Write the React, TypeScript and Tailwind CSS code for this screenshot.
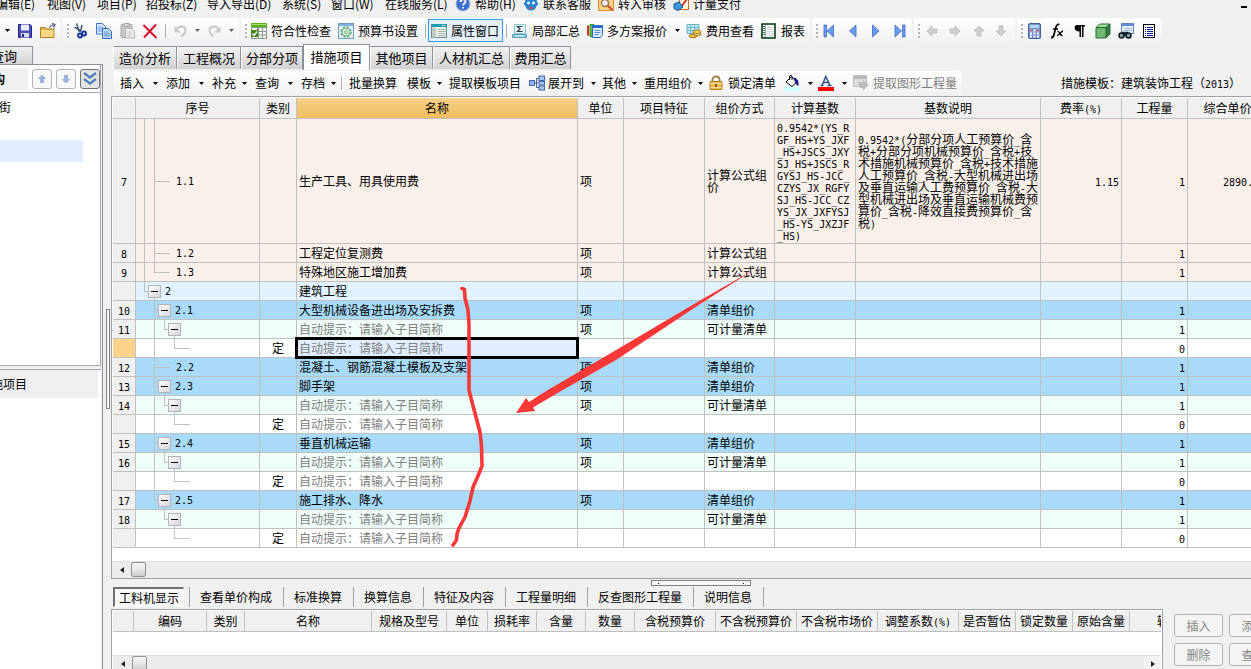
import React, { ReactNode } from "react";

/* ---------- shared pieces ---------- */

function Mixed({ text }: { text: string }) {
  return (
    <>
      {text.split(/([!-~]+)/).map((part, i) =>
        i % 2 === 1 ? (
          <span key={i} className="font-['DejaVu_Sans_Mono',monospace] text-[10px] leading-[8px]">
            {part}
          </span>
        ) : (
          part
        ),
      )}
    </>
  );
}

function Ico({ children, className = "" }: { children: ReactNode; className?: string }) {
  return (
    <svg viewBox="0 0 16 16" aria-hidden="true" className={`size-4 shrink-0 ${className}`}>
      {children}
    </svg>
  );
}

function Caret({ dim = false }: { dim?: boolean }) {
  return (
    <svg viewBox="0 0 5 3" aria-hidden="true" className="h-[3px] w-[5px] shrink-0">
      <path d="M0 0h5L2.500 3z" fill={dim ? "#666" : "#000"} />
    </svg>
  );
}

function Grip() {
  return (
    <svg viewBox="0 0 2 14" aria-hidden="true" className="mx-1 h-[14px] w-[2px] shrink-0">
      {[0, 4, 8, 12].map((y) => (
        <rect key={y} y={y} width="2" height="2" fill="#b4b4b4" />
      ))}
    </svg>
  );
}

function Band({ className, children }: { className: string; children: ReactNode }) {
  return (
    <div
      role="toolbar"
      className={`mr-[2px] flex h-[25px] shrink-0 items-center rounded-r-sm bg-linear-to-b from-white to-[#f0f0f0] ${className}`}
    >
      {children}
    </div>
  );
}

function Tool({
  w,
  icon,
  label,
  caret,
  title,
}: {
  w: string;
  icon?: ReactNode;
  label?: string;
  caret?: boolean;
  title?: string;
}) {
  return (
    <button type="button" aria-label={label ?? title} className={`flex shrink-0 items-center gap-1 whitespace-nowrap ${w}`}>
      {icon}
      {label && <span>{label}</span>}
      {caret && (
        <span className="ml-1 flex">
          <Caret />
        </span>
      )}
    </button>
  );
}

/* ---------- icons ---------- */

const SaveIcon = (
  <Ico>
    <path d="M1.500 1.500h11.500l1.500 1.500v11.500h-13z" fill="#4a4ab8" stroke="#24248c" />
    <rect x="4" y="1.500" width="8" height="6" fill="#e8f0fc" />
    <rect x="4" y="10" width="8" height="4.500" fill="#d8dcec" />
    <rect x="5" y="11" width="2" height="3" fill="#24248c" />
  </Ico>
);
const FolderIcon = (
  <Ico>
    <path d="M.5 4.500h5l1.500 1.500h7v8.500H.5z" fill="#e4b44c" stroke="#b07c20" />
    <path d="M1 7h12.500v7H1z" fill="#f8d884" />
    <path d="M9.500 4.500c1-2 2.500-2.500 4-2.500M12 .5l3 1-1.500 3" fill="none" stroke="#334a6a" strokeWidth="1.200" />
  </Ico>
);
const CutIcon = (
  <Ico>
    <path d="M3.500 .5L6.500 9M9 2L7.500 9" stroke="#4c6484" strokeWidth="1.600" fill="none" />
    <path d="M1.500 4l6 4" stroke="#20406c" strokeWidth="1.300" />
    <circle cx="7" cy="12.500" r="2" fill="none" stroke="#0c2c9c" strokeWidth="1.800" />
    <circle cx="11" cy="10.500" r="2" fill="none" stroke="#0c2c9c" strokeWidth="1.800" />
  </Ico>
);
const CopyIcon = (
  <Ico>
    <path d="M.5.5h6l3 3v7.500h-9z" fill="#d6e8fc" stroke="#3c78c8" />
    <path d="M2 4h5M2 6h5M2 8h5" stroke="#6c9cdc" />
    <path d="M6.500 5.500h6l3 3v7h-9z" fill="#c4dcfa" stroke="#2c68bc" />
    <path d="M8 9h5M8 11h6M8 13h6" stroke="#5c90d4" />
  </Ico>
);
const PasteIcon = (
  <Ico>
    <rect x="1" y="1.500" width="11" height="13" rx="1" fill="#c8c8c8" stroke="#aaa" />
    <rect x="4" y=".5" width="5" height="3" fill="#ddd" stroke="#aaa" />
    <path d="M5.500 5.500h6l3 3v6.500h-9z" fill="#eee" stroke="#b4b4b4" />
    <path d="M7 9h5M7 11h5M7 13h5" stroke="#ccc" />
  </Ico>
);
const DeleteIcon = (
  <Ico>
    <path d="M1.500 2l13 13M14 1.500L2 14.500" stroke="#d8142c" strokeWidth="2" fill="none" />
  </Ico>
);
const UndoIcon = (
  <Ico>
    <path d="M3.500 6.500C6 2 13 3 12.500 8c-.3 3-2.500 4-4.500 5.500" fill="none" stroke="#c8c8c8" strokeWidth="2.200" />
    <path d="M1.500 3v6.500H8z" fill="#c8c8c8" />
  </Ico>
);
const RedoIcon = (
  <Ico>
    <path d="M11.500 6.500C9 2 2 3 2.500 8c.3 3 2.500 4 4.500 5.500" fill="none" stroke="#ccc" strokeWidth="2.200" />
    <path d="M13.500 3v6.500H7z" fill="#ccc" />
  </Ico>
);
const CheckTableIcon = (
  <Ico>
    <rect width="16" height="16" fill="#8c9490" />
    <rect width="16" height="4" fill="#5cb41c" />
    <path d="M1 1.500h14" stroke="#a4e06c" />
    <path d="M1 5h5v2H1zM8 5h3v3H8zM12 5h3v3h-3zM8 9h3v2.500H8zM12 9h3v2.500h-3zM8 12.500h3V15H8zM12 12.500h3V15h-3zM1 14h6v1H1z" fill="#f4f8f4" />
    <rect y="7" width="7" height="7" fill="#408818" />
    <path d="M1.500 10.500l1.500 2 3-4" fill="none" stroke="#fff" strokeWidth="1.300" />
  </Ico>
);
const GearPageIcon = (
  <Ico>
    <rect x=".5" y=".5" width="15" height="15" fill="#e8f2fa" stroke="#6c9cc4" />
    <rect x="1" y="1" width="14" height="2" fill="#80b0dc" />
    <circle cx="8" cy="9" r="5" fill="none" stroke="#68b078" strokeWidth="1.600" strokeDasharray="2.500 1.400" />
    <circle cx="8" cy="9" r="4" fill="#e8f8ec" stroke="#68b078" />
    <circle cx="8" cy="9" r="1.500" fill="#fff" stroke="#68b078" />
  </Ico>
);
const WindowIcon = (
  <Ico>
    <rect x=".5" y="1.500" width="15" height="13" fill="#f0f4f0" stroke="#6c8c8c" />
    <rect x="1" y="1" width="15" height="3" fill="#1c9cac" />
    <rect x="1" y="4.500" width="4" height="10" fill="#b8ccc4" />
    <path d="M6.500 6.500h8M6.500 8.500h8M6.500 10.500h8M6.500 12.500h8" stroke="#a0b8a8" />
    <path d="M11 2.500h3.500" stroke="#fff" strokeDasharray="1 .6" />
  </Ico>
);
const SigmaIcon = (
  <Ico>
    <path d="M2.500 1.500h11v9h-11z" fill="#e4f4f8" stroke="#8cc4d4" />
    <path d="M10.500 3.500h-5L8 6 5.500 8.500h5" fill="none" stroke="#303840" strokeWidth="1.200" />
    <path d="M.5 11.500h14v3H.5z" fill="#7cc8dc" stroke="#54a0b8" />
    <path d="M3 13h9" stroke="#fff" />
  </Ico>
);
const PlansIcon = (
  <Ico>
    <path d="M.5 3v9M1.500 2v11" stroke="#e03020" />
    <path d="M3 1.500h4v12H3z" fill="#58c050" stroke="#289828" />
    <path d="M5.500 2.500h10v9l-2 3h-8z" fill="#dcecfc" stroke="#2868d0" />
    <path d="M6 3h9.500v2H6z" fill="#2868d0" />
    <path d="M7.500 7.500h6M7.500 9.500h6M7.500 11.500h4" stroke="#5c90e0" />
  </Ico>
);
const CostIcon = (
  <Ico>
    <path d="M1 1.500h12v9H1z" fill="#c4e8f4" stroke="#70b0c8" />
    <path d="M1 4.500h12M1 7.500h12M4.500 2v8M8.500 2v8" stroke="#70b8d0" />
    <ellipse cx="7" cy="13" rx="4" ry="1.800" fill="#f0c048" stroke="#a87c20" />
    <ellipse cx="11" cy="11" rx="4" ry="1.800" fill="#f8d468" stroke="#a87c20" />
    <ellipse cx="11" cy="8.800" rx="4" ry="1.800" fill="#f8d468" stroke="#a87c20" />
  </Ico>
);
const ReportIcon = (
  <Ico>
    <rect x="1" y="1" width="13" height="14" fill="#fff" stroke="#0c3c14" strokeWidth="1.600" />
    <path d="M4.500 2v12" stroke="#88a890" />
    <path d="M2 3.500h2M2 5.500h2M2 7.500h2M2 9.500h2M2 11.500h2" stroke="#50785c" />
    <path d="M6 4.500h7M6 6.500h7M6 8.500h7M6 10.500h7M6 12.500h7" stroke="#c8d4dc" />
  </Ico>
);

function Nav({ d, w, label }: { d: string; w: string; label: string }) {
  return (
    <Tool
      w={w}
      title={label}
      icon={
        <Ico>
          <path d={d} fill="#6c9cec" stroke="#3c6cc8" strokeWidth=".8" />
        </Ico>
      }
    />
  );
}
function GrayArrow({ r, w, label }: { r: number; w: string; label: string }) {
  return (
    <Tool
      w={w}
      title={label}
      icon={
        <Ico>
          <path transform={`rotate(${r} 8 8)`} d="M3 8l5-5v3h5v4H8v3z" fill="#d0d0d0" stroke="#b8b8b8" strokeWidth=".8" />
        </Ico>
      }
    />
  );
}

const CalcIcon = (
  <Ico>
    <rect x="1.500" y=".5" width="12" height="15" rx="1.500" fill="#7494cc" stroke="#44609c" />
    <rect x="3" y="2" width="9" height="3" fill="#b4d8fc" />
    <path d="M3 7.500h9M3 10.500h9M3 13.500h9" stroke="#fff" strokeWidth="1.800" strokeDasharray="2 1.500" />
    <path d="M3 7.500h2M10 7.500h2" stroke="#e05858" strokeWidth="1.800" />
  </Ico>
);
const FxIcon = (
  <Ico>
    <path d="M1 14.500c2 .5 2.500-1 3-3L6 4c.5-2 1.500-3 3.500-2.500M3 6h5" fill="none" stroke="#000" strokeWidth="1.700" />
    <path d="M7.500 8.500c2-1 2 4.500 5 4M13 8c-2 0-3 4.500-6 4.500" fill="none" stroke="#000" strokeWidth="1.400" />
  </Ico>
);
const ParaIcon = (
  <Ico>
    <path d="M5 2h8v1.500h-1.500V14H10V3.500H9V14H7.500V8.500C1.500 8.500 1.500 2 5 2z" fill="#000" />
  </Ico>
);
const CubeIcon = (
  <Ico>
    <path d="M1 4.500L5 1h10l-4 3.500z" fill="#a8dca0" stroke="#286830" />
    <path d="M11 4.500L15 1v10l-4 4z" fill="#387c40" stroke="#286830" />
    <path d="M1 4.500h10V15H1z" fill="#70b874" stroke="#286830" />
  </Ico>
);
const FindIcon = (
  <Ico>
    <rect x="3.500" y=".5" width="12" height="10" fill="#e8f0fc" stroke="#6484c0" />
    <path d="M4 1h11v2H4z" fill="#5c8cdc" />
    <path d="M6 5.500h8M6 7.500h8" stroke="#a0b8e0" />
    <circle cx="3.500" cy="12.500" r="2.500" fill="#84a4b4" stroke="#101820" strokeWidth="1.500" />
    <circle cx="10.500" cy="12.500" r="2.500" fill="#84a4b4" stroke="#101820" strokeWidth="1.500" />
    <path d="M4 9.500h2l1 2.500 1-2.500h2" fill="none" stroke="#101820" strokeWidth="1.500" />
  </Ico>
);
const ListIcon = (
  <Ico>
    <rect x="2.500" y="1.500" width="11" height="13" fill="#fff" stroke="#000" />
    <path d="M4 4.500h1M4 6.500h1M4 8.500h1M4 10.500h1M4 12.500h1M6 4.500h6M6 6.500h6M6 8.500h6M6 10.500h6M6 12.500h6" stroke="#101890" />
  </Ico>
);
const HelpIcon = (
  <Ico>
    <circle cx="8" cy="8" r="7" fill="#3c70d4" stroke="#a8b8d0" />
    <path d="M5.500 6c0-3.500 5-3.300 5-.4C10.500 7.500 8 7.500 8 9.500M8 11v1.600" stroke="#fff" strokeWidth="1.700" fill="none" />
  </Ico>
);
const ServiceIcon = (
  <Ico>
    <path d="M2 6c0-7 12-7 12 0l1.500 2-2 2c-1 6-10 6-11 0l-2-2z" fill="#2484cc" />
    <circle cx="5.500" cy="7" r="1.400" fill="#fff" />
    <circle cx="10.500" cy="7" r="1.400" fill="#fff" />
    <path d="M6 12h4" stroke="#e04848" strokeWidth="1.600" />
  </Ico>
);
const AuditIcon = (
  <Ico>
    <rect x=".5" y="1.500" width="15" height="13" fill="#f8d488" stroke="#dc8c2c" />
    <circle cx="7" cy="7" r="3.500" fill="#e4f0fc" stroke="#a86c40" strokeWidth="1.400" />
    <path d="M9.500 9.500l5 4.500" stroke="#cc4c20" strokeWidth="2" />
  </Ico>
);
const PayIcon = (
  <Ico>
    <rect x="6.500" y="1.500" width="9" height="12" fill="#fff4dc" stroke="#c86c20" />
    <path d="M8 11l6-8" stroke="#cc2c20" strokeWidth="1.800" />
    <path d="M1 8l5-2 4 5-5 3.500-4-2z" fill="#3c9cdc" stroke="#14508c" />
  </Ico>
);
const ExpandIcon = (
  <Ico>
    <path d="M5 8h4M7.500 3.500v9M7.500 3.500H10M7.500 12.500H10" fill="none" stroke="#445c8c" />
    <rect x=".5" y="5.500" width="5" height="5" fill="#8cb4e8" stroke="#4468ac" />
    <rect x="10" y="1" width="5.500" height="4.500" fill="#a8c8f0" stroke="#4468ac" />
    <rect x="10" y="6.500" width="5.500" height="3.500" fill="#a8c8f0" stroke="#4468ac" />
    <rect x="10" y="11" width="5.500" height="4" fill="#a8c8f0" stroke="#4468ac" />
  </Ico>
);
const LockIcon = (
  <Ico>
    <path d="M4.500 7V4.500c0-4 7-4 7 0V7" fill="none" stroke="#a08448" strokeWidth="1.800" />
    <rect x="2" y="6.500" width="12" height="8" rx="1" fill="#ecbc54" stroke="#b07c20" />
    <path d="M2.500 8.500h11M2.500 12.500h11" stroke="#f8dc94" />
    <path d="M8 9v3" stroke="#5c4010" strokeWidth="1.600" />
  </Ico>
);
const BucketIcon = (
  <Ico>
    <path d="M2 7l5.500-5.500L13 7l-5 4.500z" fill="#fff" stroke="#000" />
    <path d="M5.500 5V1.500C5.500 0 8 0 8 1.500V5" fill="none" stroke="#000" />
    <path d="M10 3c3 .5 4.500 3 4 7.500l-2-2z" fill="#14188c" stroke="#14188c" />
    <rect x="0" y="12" width="16" height="4" fill="#ccffff" />
  </Ico>
);
const FontColorIcon = (
  <Ico>
    <path d="M2.500 10.500h3M9.500 10.500h4M4 10.500L7.800 1.500 12 10.500M5.500 7.500h5" fill="none" stroke="#34548c" strokeWidth="1.600" />
    <rect y="12" width="16" height="4" fill="#f00" />
  </Ico>
);
const ExtractIcon = (
  <Ico>
    <rect x=".5" y=".5" width="13" height="11" fill="#ddd" stroke="#c0c0c0" />
    <path d="M1 1h12.500v3H1z" fill="#b8b8b8" />
    <path d="M5 7h5V4.500l5.500 5.500-5.500 5.500V13H7z" fill="#bbb" />
  </Ico>
);

/* ---------- menu and toolbars ---------- */

const menus = [
  ["编辑(E)", "w-[51px]"],
  ["视图(V)", "w-[50px]"],
  ["项目(P)", "w-[49px]"],
  ["招投标(Z)", "w-[61px]"],
  ["导入导出(D)", "w-[75px]"],
  ["系统(S)", "w-[49px]"],
  ["窗口(W)", "w-[54px]"],
  ["在线服务(L)", "w-[70px]"],
];

function MenuBar() {
  return (
    <nav className="flex h-[18px] shrink-0 items-start overflow-hidden">
      <div className="-ml-1 -mt-[5px] flex h-[18px] items-center">
        {menus.map(([t, w]) => (
          <button key={t} type="button" className={`shrink-0 whitespace-nowrap text-left ${w}`}>
            {t}
          </button>
        ))}
        <Tool w="w-[68px]" icon={HelpIcon} label="帮助(H)" />
        <Tool w="w-[75px]" icon={ServiceIcon} label="联系客服" />
        <Tool w="w-[75px]" icon={AuditIcon} label="转入审核" />
        <Tool w="w-[75px]" icon={PayIcon} label="计量支付" />
      </div>
      <button type="button" aria-label="最小化" className="ml-auto mr-1 mt-[6px] h-[2px] w-[6px] bg-black" />
    </nav>
  );
}

function Sep() {
  return <span className="h-[14px] w-px shrink-0 bg-[#b0b0b0]" />;
}

function MainToolbar() {
  return (
    <div className="flex h-[26px] shrink-0 overflow-hidden">
      <Band className="w-[61px] pl-[5px]">
        <button type="button" aria-label="新建" className="w-[12px]">
          <Caret />
        </button>
        <Tool w="w-[23px]" icon={SaveIcon} title="保存" />
        <Tool w="w-[16px]" icon={FolderIcon} title="打开" />
      </Band>
      <Band className="w-[176px]">
        <Grip />
        <Tool w="w-[23px]" icon={CutIcon} title="剪切" />
        <Tool w="w-[24px]" icon={CopyIcon} title="复制" />
        <Tool w="w-[22px]" icon={PasteIcon} title="粘贴" />
        <Tool w="w-[23px]" icon={DeleteIcon} title="删除" />
        <Sep />
        <span className="w-[7px]" />
        <Tool w="w-[22px]" icon={UndoIcon} title="撤销" />
        <Caret dim />
        <span className="w-[7px]" />
        <Tool w="w-[22px]" icon={RedoIcon} title="恢复" />
        <Caret dim />
      </Band>
      <Band className="w-[569px]">
        <Grip />
        <Tool w="w-[87px]" icon={CheckTableIcon} label="符合性检查" />
        <Tool w="w-[87px]" icon={GearPageIcon} label="预算书设置" />
        <Sep />
        <button
          type="button"
          className="ml-[2px] mr-[3px] flex h-[23px] w-[75px] shrink-0 items-center gap-1 border border-[#3399ff] bg-[#e4f0fc] pl-[2px] whitespace-nowrap"
        >
          {WindowIcon}
          属性窗口
        </button>
        <Sep />
        <span className="w-[5px]" />
        <Tool w="w-[75px]" icon={SigmaIcon} label="局部汇总" />
        <Tool w="w-[99px]" icon={PlansIcon} label="多方案报价" caret />
        <Tool w="w-[75px]" icon={CostIcon} label="费用查看" />
        <Tool w="w-[48px]" icon={ReportIcon} label="报表" />
      </Band>
      <Band className="w-[100px]">
        <Grip />
        <Nav w="w-[23px]" label="第一条" d="M2 2h2.500v12H2zM11.500 2v12L5 8z" />
        <Nav w="w-[23px]" label="上一条" d="M11 2v12L4.500 8z" />
        <Nav w="w-[23px]" label="下一条" d="M4.500 2v12L11 8z" />
        <Nav w="w-[20px]" label="最后一条" d="M4 2v12L10.500 8zM11.500 2H14v12h-2.500z" />
      </Band>
      <Band className="w-[101px]">
        <Grip />
        <GrayArrow w="w-[23px]" label="左移" r={0} />
        <GrayArrow w="w-[24px]" label="右移" r={180} />
        <GrayArrow w="w-[22px]" label="上移" r={90} />
        <GrayArrow w="w-[20px]" label="下移" r={270} />
      </Band>
      <Band className="w-[145px]">
        <Grip />
        <Tool w="w-[23px]" icon={CalcIcon} title="计算器" />
        <Tool w="w-[22px]" icon={FxIcon} title="函数" />
        <Tool w="w-[23px]" icon={ParaIcon} title="段落" />
        <Tool w="w-[23px]" icon={CubeIcon} title="图元" />
        <Tool w="w-[23px]" icon={FindIcon} title="查找" />
        <Tool w="w-[16px]" icon={ListIcon} title="列表" />
      </Band>
    </div>
  );
}

/* ---------- left side ---------- */

function SideArrow({ kind, label }: { kind: "up" | "down" | "more"; label: string }) {
  const frame = kind === "more" ? "border-[#707070] bg-[#e4e4e4]" : "border-[#b0b4b8] bg-[#f8f8f8]";
  return (
    <button type="button" aria-label={label} className={`flex size-5 shrink-0 items-center justify-center rounded-[3px] border ${frame}`}>
      <Ico>
        {kind === "up" && <path d="M8 3.500l4.500 4.500H10v4H6V8H3.500z" fill="#9cb4dc" />}
        {kind === "down" && <path d="M8 12.500L3.500 8H6V4h4v4h2.500z" fill="#9cb4dc" />}
        {kind === "more" && <path d="M2 2l6 4.500L14 2M2 8l6 4.500L14 8" fill="none" stroke="#5080b8" strokeWidth="2.200" />}
      </Ico>
    </button>
  );
}

function Sidebar() {
  return (
    <aside className="flex w-[103px] shrink-0 flex-col overflow-hidden pt-[2px]">
      <div className="flex">
        <button
          type="button"
          className="h-[18px] w-[33px] overflow-hidden border-t border-r border-[#8c9098] bg-linear-to-b from-[#f0f0f0] to-[#d4d4d4] text-left text-[13px] leading-[17px] whitespace-nowrap"
        >
          <span className="-ml-[9px]">查询</span>
        </button>
      </div>
      <div className="flex min-h-0 flex-1 flex-col border-t border-r border-[#8c9098] pr-px">
        <div className="flex h-7 shrink-0 items-center gap-1 border-r border-b border-[#a8a8b0] bg-white">
          <div className="flex h-[22px] w-7 items-center overflow-hidden bg-[#f0f0f0] font-bold">
            <span className="-ml-[7px]">构</span>
          </div>
          <SideArrow kind="up" label="上移" />
          <SideArrow kind="down" label="下移" />
          <SideArrow kind="more" label="展开" />
        </div>
        <div className="flex-1 border-r border-b border-[#a8a8b0] bg-white">
          <div className="h-[27px] overflow-hidden pt-[6px]">
            <span className="-ml-px">街</span>
          </div>
          <div className="mt-5 h-[22px] w-[83px] bg-[#e0eeff]" />
        </div>
        <div className="flex h-[303px] shrink-0 flex-col pt-[3px]">
          <div className="flex-1 border-t border-[#a0a0a0] bg-white pr-[3px]">
            <div className="flex h-7 items-center overflow-hidden bg-[#f0f0f0]">
              <span className="-ml-[9px] whitespace-nowrap">施项目</span>
            </div>
          </div>
        </div>
      </div>
    </aside>
  );
}

/* ---------- main area ---------- */

const pageTabs = [
  ["造价分析", "w-[64px]"],
  ["工程概况", "w-[64px]"],
  ["分部分项", "w-[62px]"],
  ["措施项目", "w-[67px]"],
  ["其他项目", "w-[63px]"],
  ["人材机汇总", "w-[77px]"],
  ["费用汇总", "w-[61px]"],
];

function PageTabs() {
  return (
    <div role="tablist" className="flex h-[26px] shrink-0 items-end pl-[2px] text-[13px]">
      {pageTabs.map(([t, w]) => {
        const on = t === "措施项目";
        return (
          <button
            key={t}
            type="button"
            role="tab"
            aria-selected={on}
            className={`shrink-0 border-t border-r border-l whitespace-nowrap ${w} ${
              on
                ? "h-[26px] border-[#8c9098] bg-white pb-[2px]"
                : "mb-px h-[23px] border-[#8c9098] border-l-white bg-linear-to-b from-[#f2f2f2] to-[#d2d2d2]"
            }`}
          >
            {t}
          </button>
        );
      })}
    </div>
  );
}

function ActionBar() {
  return (
    <div className="flex h-[26px] shrink-0 items-center overflow-hidden pl-[3px]">
      <Band className="w-[848px] pl-[6px]">
        <Tool w="w-[46px] gap-[5px]" label="插入" caret />
        <Tool w="w-[46px] gap-[5px]" label="添加" caret />
        <Tool w="w-[43px] gap-[2px]" label="补充" caret />
        <Tool w="w-[46px] gap-[5px]" label="查询" caret />
        <Tool w="w-[40px] gap-[2px]" label="存档" caret />
        <Sep />
        <Tool w="ml-[7px] w-[58px]" label="批量换算" />
        <Tool w="w-[42px] gap-[2px]" label="模板" caret />
        <Tool w="w-[80px]" label="提取模板项目" />
        <Tool w="w-[73px] gap-[3px]" icon={ExpandIcon} label="展开到" caret />
        <Tool w="w-[42px] gap-[2px]" label="其他" caret />
        <Tool w="w-[64px] gap-[2px]" label="重用组价" caret />
        <Tool w="w-[76px]" icon={LockIcon} label="锁定清单" />
        <Tool w="w-[34px]" icon={BucketIcon} title="填充色" caret />
        <Tool w="w-[35px]" icon={FontColorIcon} title="字体色" caret />
        <button type="button" disabled className="flex shrink-0 items-center gap-1 whitespace-nowrap text-[#808080]">
          {ExtractIcon}
          提取图形工程量
        </button>
      </Band>
      <div className="ml-auto mr-[10px] whitespace-nowrap">
        <Mixed text="措施模板：建筑装饰工程（2013）" />
      </div>
    </div>
  );
}

type Tree = {
  /* x positions of full-height and half-height guide lines */
  full: number[];
  half?: number;
  from?: number;
  box?: number;
  leaf?: number;
  text?: string;
};

function TreeCell({ t, h }: { t: Tree; h: number }) {
  const mid = Math.floor(h / 2);
  const w = t.box ?? t.leaf ?? 34;
  const start = t.half ?? t.from;
  return (
    <div className="flex items-center">
      <svg width={w} height={h} className="shrink-0" aria-hidden="true">
        {t.full.map((x) => (
          <rect key={x} x={x} width="1" height={h} fill="#c0c0c0" />
        ))}
        {t.half !== undefined && <rect x={t.half} width="1" height={mid + 1} fill="#c0c0c0" />}
        {start !== undefined && <rect x={start} y={mid} width={w - start} height="1" fill="#c0c0c0" />}
      </svg>
      {t.box !== undefined && (
        <div className="flex h-[18px] w-[13px] shrink-0 flex-col items-center pt-[3px]">
          <button
            type="button"
            aria-label="折叠"
            className="flex size-[13px] shrink-0 items-center justify-center border border-[#b4b4b4] bg-linear-to-br from-white to-[#d4d4dc]"
          >
            <span className="h-px w-[7px] bg-black" />
          </button>
          <span className="w-px flex-1 bg-[#c0c0c0]" />
        </div>
      )}
      {t.text && (
        <span className={`pt-px font-['DejaVu_Sans_Mono',monospace] text-[10px] ${t.box === undefined ? "pl-[6px]" : "pl-1"}`}>{t.text}</span>
      )}
    </div>
  );
}

type Row = {
  no: string;
  tree: Tree;
  kind?: string;
  name: string;
  hint?: boolean;
  unit?: string;
  mode?: string;
  qty?: string;
  bg: string;
  selected?: boolean;
};

const PINK = "bg-[#f9f0eb]";
const PALE = "bg-[#e1f3fe]";
const BLUE = "bg-[#a8dbfa]";
const MINT = "bg-[#f0fefa]";
const HINT = "自动提示：请输入子目简称";

const item = (no: string, text: string, name: string, last = false): Row => ({
  no,
  tree: { full: last ? [] : [18], half: last ? 18 : undefined, from: 18, box: 22, text },
  name,
  unit: "项",
  mode: "清单组价",
  qty: "1",
  bg: BLUE,
});
const sub = (no: string, unit = "项", last = false): Row => ({
  no,
  tree: { full: last ? [] : [18], half: 28, box: 32 },
  name: HINT,
  hint: true,
  unit,
  mode: "可计量清单",
  qty: "1",
  bg: MINT,
});
const quota = (last = false, selected = false): Row => ({
  no: "",
  tree: { full: last ? [] : [18], half: 38, leaf: 54 },
  kind: "定",
  name: HINT,
  hint: true,
  qty: "0",
  bg: "bg-white",
  selected,
});

const rows: Row[] = [
  { no: "7", tree: { full: [8, 18], from: 18, text: "1.1" }, name: "生产工具、用具使用费", unit: "项", mode: "计算公式组\n价", qty: "1", bg: PINK },
  { no: "8", tree: { full: [8, 18], from: 18, text: "1.2" }, name: "工程定位复测费", unit: "项", mode: "计算公式组", qty: "1", bg: PINK },
  { no: "9", tree: { full: [8], half: 18, text: "1.3" }, name: "特殊地区施工增加费", unit: "项", mode: "计算公式组", qty: "1", bg: PINK },
  { no: "", tree: { full: [], half: 8, box: 12, text: "2" }, name: "建筑工程", bg: PALE },
  item("10", "2.1", "大型机械设备进出场及安拆费"),
  sub("11"),
  quota(false, true),
  { ...item("12", "2.2", "混凝土、钢筋混凝土模板及支架"), tree: { full: [18], from: 18, text: "2.2" } },
  item("13", "2.3", "脚手架"),
  sub("14"),
  quota(),
  item("15", "2.4", "垂直机械运输"),
  sub("16"),
  quota(),
  item("17", "2.5", "施工排水、降水", true),
  sub("18", "", true),
  quota(true),
];

const FORMULA = "0.9542*(YS_R\nGF_HS+YS_JXF\n_HS+JSCS_JXY\nSJ_HS+JSCS_R\nGYSJ_HS-JCC_\nCZYS_JX_RGFY\nSJ_HS-JCC_CZ\nYS_JX_JXFYSJ\n_HS-YS_JXZJF\n_HS)";
const FORMULA_TEXT =
  "0.9542*(分部分项人工预算价_含\n税+分部分项机械预算价_含税+技\n术措施机械预算价_含税+技术措施\n人工预算价_含税-大型机械进出场\n及垂直运输人工费预算价_含税-大\n型机械进出场及垂直运输机械费预\n算价_含税-降效直接费预算价_含\n税)";

const gridCols = [
  ["", "w-[23px]"],
  ["序号", "w-[124px]"],
  ["类别", "w-[37px]"],
  ["名称", "w-[281px]"],
  ["单位", "w-[46px]"],
  ["项目特征", "w-[81px]"],
  ["组价方式", "w-[70px]"],
  ["计算基数", "w-[81px]"],
  ["基数说明", "w-[185px]"],
  ["费率(%)", "w-[81px]"],
  ["工程量", "w-[66px]"],
  ["综合单价", "w-[80px]"],
];

const cell = "border-r border-b border-[#c0c0c0] p-0 whitespace-pre overflow-hidden";

function MeasureGrid() {
  return (
    <table className="w-[1155px] table-fixed border-separate border-spacing-0 leading-3">
      <thead>
        <tr className="h-[21px]">
          {gridCols.map(([t, w], i) => (
            <th
              key={i}
              scope="col"
              className={`${cell} ${w} font-normal ${t === "名称" ? "bg-linear-to-b from-[#f6d089] to-[#f1bd60]" : "bg-[#f0f0f0]"}`}
            >
              <Mixed text={t} />
            </th>
          ))}
        </tr>
      </thead>
      <tbody>
        {rows.map((r, i) => {
          const tall = i === 0;
          const c = `${cell} ${r.bg}`;
          return (
            <tr key={i} className={tall ? "h-[125px]" : "h-[19px]"}>
              <th scope="row" className={`${cell} text-center font-normal ${r.selected ? "bg-[#ffd28c]" : "bg-[#f0f0f0]"}`}>
                <Mixed text={r.no} />
              </th>
              <td className={c}>
                <TreeCell t={r.tree} h={tall ? 124 : 18} />
              </td>
              <td className={`${c} text-center`}>{r.kind}</td>
              {r.selected ? (
                <td className="border-r border-b border-[#c0c0c0] p-0 whitespace-pre">
                  <div className="relative flex h-[18px] items-center bg-[#e0eeff] pl-[2px] text-[#808080] outline-3 -outline-offset-1 outline-black">
                    {r.name}
                  </div>
                </td>
              ) : (
                <td className={`${c} pl-[2px] ${r.hint ? "text-[#808080]" : ""}`}>{r.name}</td>
              )}
              <td className={`${c} pl-[2px]`}>{r.unit}</td>
              <td className={c} />
              <td className={`${c} pl-[2px]`}>{r.mode}</td>
              <td className={`${c} pl-[2px]`}>{tall && <Mixed text={FORMULA} />}</td>
              <td className={`${c} pl-[2px]`}>{tall && <Mixed text={FORMULA_TEXT} />}</td>
              <td className={`${c} pr-[2px] text-right`}>{tall && <Mixed text="1.15" />}</td>
              <td className={`${c} pr-[2px] text-right`}>
                <Mixed text={r.qty ?? ""} />
              </td>
              <td className={`${c} pr-[14px] text-right`}>{tall && <Mixed text="2890." />}</td>
            </tr>
          );
        })}
      </tbody>
    </table>
  );
}

function HScroll({ right = false }: { right?: boolean }) {
  return (
    <div className="flex h-[17px] shrink-0 items-start border-t border-[#e0e0e0] bg-[#ececec]">
      <button type="button" aria-label="向左滚动" className="flex h-[15px] w-[19px] items-center justify-center">
        <svg viewBox="0 0 4 6" className="h-[6px] w-1" aria-hidden="true">
          <path d="M4 0v6L0 3z" fill="#202020" />
        </svg>
      </button>
      <div className="h-[15px] w-[15px] rounded-[2px] border border-[#909090] bg-linear-to-b from-[#f4f4f4] via-[#e8e8e8] to-[#ccc]" />
      {right && (
        <button type="button" aria-label="向右滚动" className="ml-auto flex h-[15px] w-[17px] items-center justify-center bg-[#f2f2f2]">
          <svg viewBox="0 0 4 6" className="h-[6px] w-1" aria-hidden="true">
            <path d="M0 0v6L4 3z" fill="#202020" />
          </svg>
        </button>
      )}
    </div>
  );
}

function Annotations() {
  return (
    <svg viewBox="112 97 700 480" aria-hidden="true" className="pointer-events-none absolute top-0 left-0 h-[480px] w-[700px]">
      <path
        d="M462 288.500L464.500 289.500 465 298 468 310 469 325 469 390 472 402 480 432 481.500 446 482 466 478 476 473 487 470 501 465 517 459 528 457 534 456.500 540 453 545"
        fill="none"
        stroke="#fb3838"
        strokeWidth="3.600"
        strokeLinecap="round"
        strokeLinejoin="round"
      />
      <path d="M516 413L526 398 529 402 547 390.500 600 359.500 700 300.500 755 269 701 303.500 616 360 561 391 533 407.500 535 411z" fill="#fb3838" />
    </svg>
  );
}

const detailTabs = ["查看单价构成", "标准换算", "换算信息", "特征及内容", "工程量明细", "反查图形工程量", "说明信息"];

function DetailTabs() {
  return (
    <div role="tablist" className="flex h-[22px] shrink-0 items-start overflow-hidden pl-[2px]">
      <button
        type="button"
        role="tab"
        aria-selected="true"
        className="h-[20px] w-[71px] shrink-0 border-t-2 border-r border-b border-l-2 border-t-[#707070] border-r-white border-b-white border-l-[#707070] bg-[#f8f8f8] whitespace-nowrap"
      >
        工料机显示
      </button>
      <span className="h-[20px] w-[6px] shrink-0 border-r border-[#a0a0a0]" />
      {detailTabs.map((t) => (
        <button
          key={t}
          type="button"
          role="tab"
          aria-selected="false"
          className="h-[20px] shrink-0 border-r border-[#a0a0a0] pr-[11px] pl-[10px] whitespace-nowrap"
        >
          {t}
        </button>
      ))}
    </div>
  );
}

const detailCols = [
  ["", "w-[21px]"],
  ["编码", "w-[73px]"],
  ["类别", "w-[38px]"],
  ["名称", "w-[127px]"],
  ["规格及型号", "w-[75px]"],
  ["单位", "w-[41px]"],
  ["损耗率", "w-[49px]"],
  ["含量", "w-[49px]"],
  ["数量", "w-[49px]"],
  ["含税预算价", "w-[81px]"],
  ["不含税预算价", "w-[81px]"],
  ["不含税市场价", "w-[81px]"],
  ["调整系数(%)", "w-[81px]"],
  ["是否暂估", "w-[57px]"],
  ["锁定数量", "w-[57px]"],
  ["原始含量", "w-[57px]"],
  ["转", "w-[81px] pl-[27px]! text-left"],
];

function DetailPanel() {
  return (
    <div className="flex h-[60px] shrink-0 overflow-hidden">
      <div className="flex min-w-0 flex-1 flex-col border-t border-r border-l border-[#a0a0a8] bg-white pt-px pr-px pl-px">
        <div className="flex-1 overflow-hidden">
          <table className="w-[1098px] table-fixed border-separate border-spacing-0 leading-3">
            <thead>
              <tr className="h-[21px]">
                {detailCols.map(([t, w], i) => (
                  <th key={i} scope="col" className={`${cell} bg-[#f0f0f0] font-normal ${w}`}>
                    <Mixed text={t} />
                  </th>
                ))}
              </tr>
            </thead>
          </table>
        </div>
        <div className="h-[14px] shrink-0 overflow-hidden">
          <HScroll right />
        </div>
      </div>
      <div className="w-[88px] shrink-0 overflow-hidden pt-[5px] pl-[11px]">
        <div className="grid w-[104px] grid-cols-2 gap-x-[6px] gap-y-[6px]">
          {["插入", "添加", "删除", "查询"].map((t) => (
            <button key={t} type="button" disabled className="h-[23px] rounded-[3px] border border-[#b0b4b4] bg-[#f4f4f4] whitespace-nowrap text-[#848484]">
              {t}
            </button>
          ))}
        </div>
      </div>
    </div>
  );
}

export default function App() {
  return (
    <div className="flex h-screen flex-col overflow-hidden bg-[#f0f0f0] font-['Noto_Sans_CJK_SC',sans-serif] text-[12px] leading-4 text-black">
      <MenuBar />
      <MainToolbar />
      <div className="flex min-h-0 flex-1">
        <Sidebar />
        <div className="flex w-2 shrink-0 flex-col items-end justify-center pt-1 pr-px">
          <div className="h-[100px] w-[4px] border border-[#808080] bg-[#f8f8f8]" />
        </div>
        <main className="flex min-w-0 flex-1 flex-col">
          <PageTabs />
          <ActionBar />
          <section className="relative flex min-h-0 flex-1 flex-col overflow-hidden border-t border-b border-l border-[#a0a0a8] bg-white">
            <div className="min-h-0 flex-1 overflow-hidden pt-px pl-px">
              <MeasureGrid />
            </div>
            <HScroll />
            <Annotations />
          </section>
          <div className="flex h-2 shrink-0 justify-center pt-px pl-[40px]">
            <div className="flex h-[6px] w-[100px] items-center justify-between border border-[#808080] bg-[#f8f8f8] px-[6px]">
              <span className="size-px bg-[#000080]" />
              <span className="size-px bg-[#000080]" />
            </div>
          </div>
          <DetailTabs />
          <DetailPanel />
        </main>
      </div>
    </div>
  );
}
